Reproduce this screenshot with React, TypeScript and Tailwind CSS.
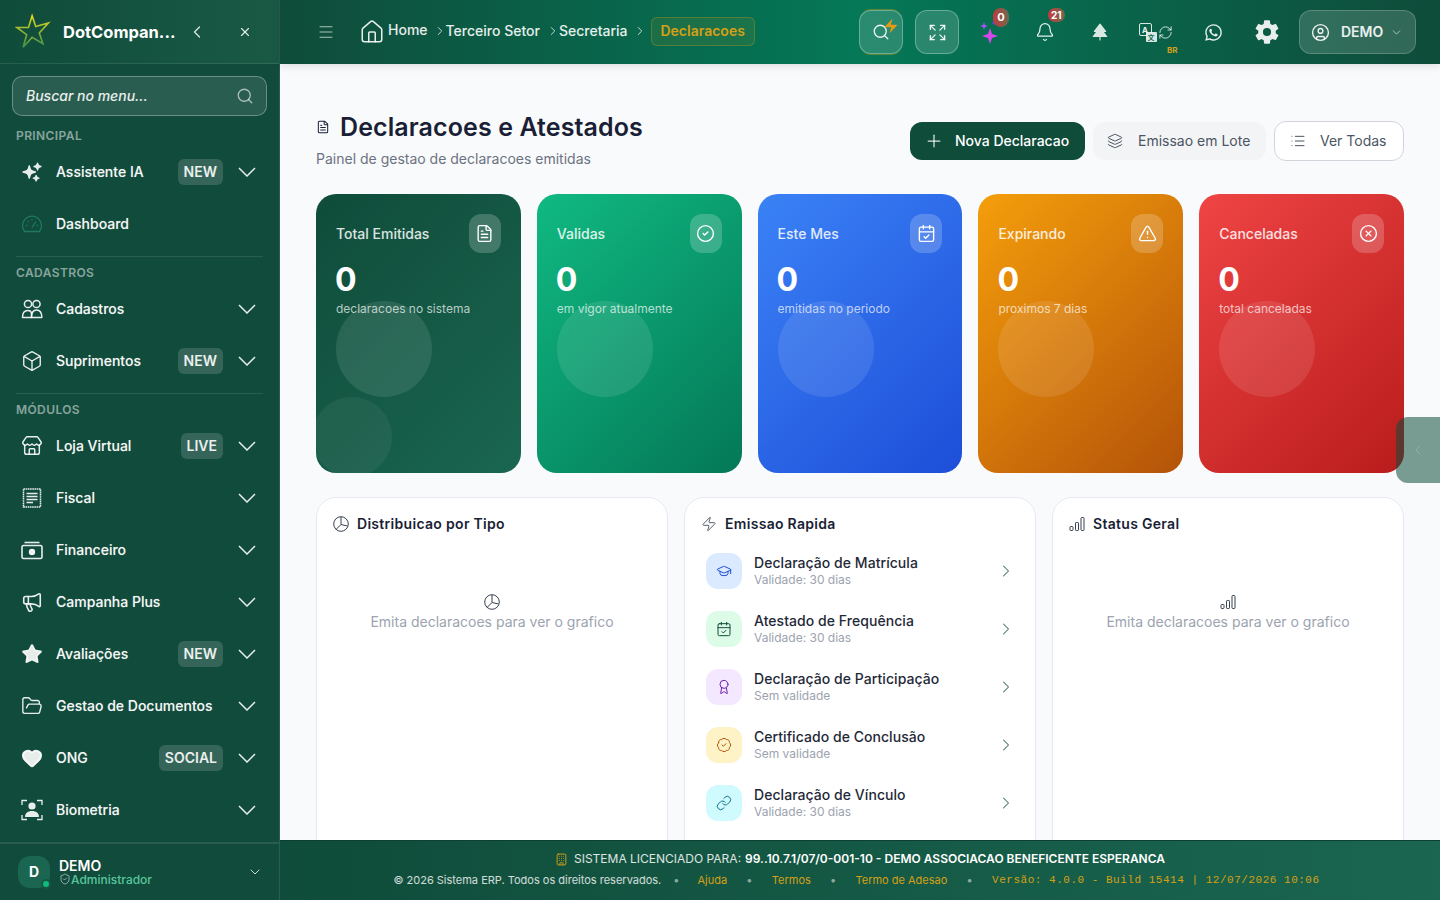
import React from 'react';
import {
  Menu, ChevronLeft, X, Search, ChevronDown, ChevronRight, Plus, Layers, List, FileText, CircleCheck,
  CalendarCheck, TriangleAlert, CircleX, Zap, GraduationCap, Award, BadgeCheck, Link, Bell, Expand,
  CircleUser, RefreshCw, Box, Store, Megaphone, FolderOpen, Heart, ShieldCheck, Building, Home, Star,
} from 'lucide-react';
import { HiSparkles } from 'react-icons/hi2';
import { FaWhatsapp } from 'react-icons/fa';
import { IoSettingsSharp } from 'react-icons/io5';
import { PiTreeEvergreenFill } from 'react-icons/pi';

type NavItem = { label: string; icon: React.ReactNode; badge?: string; noArrow?: boolean };

const ico = 'w-[22px] h-[22px] text-white/90';

const GaugeIcon = () => (
  <svg viewBox="0 0 22 22" className="w-[22px] h-[22px] text-[#1f7a5f]" fill="none" stroke="currentColor" strokeWidth="1.3">
    <path d="M3.5 18.5 A9.5 9.5 0 1 1 18.5 18.5 Z" strokeLinejoin="round" />
    <path d="M11 14.5 L15 8.5 M5 12.5 H6.5 M15.5 12.5 H17 M11 6 V7.5 M6.8 8 L7.8 9" />
  </svg>
);

const UsersIcon = () => (
  <svg viewBox="0 0 22 22" className={ico} fill="none" stroke="currentColor" strokeWidth="1.5">
    <circle cx="7" cy="6" r="3.6" />
    <circle cx="15.5" cy="6" r="3.6" />
    <path d="M1.5 19.5 C1.5 15 3.5 12.5 6.8 12.5 C9 12.5 10.5 14 10.5 16 V19.5 Z" strokeLinejoin="round" />
    <path d="M10.5 19.5 C10.5 15 12.5 12 15.5 12 C18.8 12 20.8 15 20.8 19.5 Z" strokeLinejoin="round" />
  </svg>
);

const FiscalIcon = () => (
  <svg viewBox="0 0 22 22" className={ico} fill="none" stroke="currentColor" strokeWidth="1.5">
    <rect x="2.5" y="2" width="17" height="18" strokeDasharray="1.6 0.6" />
    <path d="M5.5 6.5 H16.5 M5.5 9.5 H16.5 M5.5 12.5 H16.5 M5.5 15.5 H12" />
  </svg>
);

const MoneyIcon = () => (
  <svg viewBox="0 0 22 22" className={ico} fill="none" stroke="currentColor" strokeWidth="1.6">
    <path d="M3.5 3.5 H18.5" />
    <rect x="1" y="6.5" width="20" height="13" rx="1.5" />
    <circle cx="11" cy="13" r="2.4" fill="currentColor" />
  </svg>
);

const BiometricIcon = () => (
  <svg viewBox="0 0 22 22" className={ico} fill="none" stroke="currentColor" strokeWidth="1.3">
    <path d="M1 6 V1.5 H6 M16 1.5 H21 V6 M1 16 V20.5 H6 M16 20.5 H21 V16" />
    <circle cx="11" cy="7" r="3.6" fill="currentColor" stroke="none" />
    <path d="M4 18 C4 14 7 12 11 12 C15 12 18 14 18 18 Z" fill="currentColor" stroke="none" />
  </svg>
);

const principal: NavItem[] = [
  { label: 'Assistente IA', icon: <HiSparkles className={ico} />, badge: 'NEW' },
  { label: 'Dashboard', icon: <GaugeIcon />, noArrow: true },
];
const cadastros: NavItem[] = [
  { label: 'Cadastros', icon: <UsersIcon /> },
  { label: 'Suprimentos', icon: <Box className={ico} strokeWidth={1.5} />, badge: 'NEW' },
];
const modulos: NavItem[] = [
  { label: 'Loja Virtual', icon: <Store className={ico} strokeWidth={1.6} />, badge: 'LIVE' },
  { label: 'Fiscal', icon: <FiscalIcon /> },
  { label: 'Financeiro', icon: <MoneyIcon /> },
  { label: 'Campanha Plus', icon: <Megaphone className={ico} strokeWidth={1.75} /> },
  { label: 'Avaliações', icon: <Star className={ico} strokeWidth={1.5} fill="currentColor" />, badge: 'NEW' },
  { label: 'Gestao de Documentos', icon: <FolderOpen className={ico} strokeWidth={1.5} /> },
  { label: 'ONG', icon: <Heart className={ico} fill="currentColor" />, badge: 'SOCIAL' },
  { label: 'Biometria', icon: <BiometricIcon /> },
];

const stats = [
  { title: 'Total Emitidas', sub: 'declaracoes no sistema', bg: 'bg-[linear-gradient(135deg,#0f4c3a,#1a6650)]', icon: FileText, extra: true },
  { title: 'Validas', sub: 'em vigor atualmente', bg: 'bg-[linear-gradient(135deg,#10b981,#047857)]', icon: CircleCheck },
  { title: 'Este Mes', sub: 'emitidas no periodo', bg: 'bg-[linear-gradient(135deg,#3b82f6,#1d4ed8)]', icon: CalendarCheck },
  { title: 'Expirando', sub: 'proximos 7 dias', bg: 'bg-[linear-gradient(135deg,#f59e0b,#b45309)]', icon: TriangleAlert },
  { title: 'Canceladas', sub: 'total canceladas', bg: 'bg-[linear-gradient(135deg,#ef4444,#b91c1c)]', icon: CircleX },
];

const quick = [
  { title: 'Declaração de Matrícula', sub: 'Validade: 30 dias', box: 'bg-[#dbeafe]', color: 'text-[#1d4ed8]', icon: GraduationCap },
  { title: 'Atestado de Frequência', sub: 'Validade: 30 dias', box: 'bg-[#dcfce7]', color: 'text-[#0f4c3a]', icon: CalendarCheck },
  { title: 'Declaração de Participação', sub: 'Sem validade', box: 'bg-[#f3e8ff]', color: 'text-[#6b21a8]', icon: Award },
  { title: 'Certificado de Conclusão', sub: 'Sem validade', box: 'bg-[#fef3c7]', color: 'text-[#b45309]', icon: BadgeCheck },
  { title: 'Declaração de Vínculo', sub: 'Validade: 30 dias', box: 'bg-[#cffafe]', color: 'text-[#0e7490]', icon: Link },
];

const Logo = () => (
  <svg viewBox="0 0 40 40" className="w-[36px] h-[38px] shrink-0">
    <defs>
      <linearGradient id="logoStar" x1="0" y1="0" x2="0" y2="1">
        <stop offset="0" stopColor="#e6d820" />
        <stop offset="1" stopColor="#3f8f4a" />
      </linearGradient>
    </defs>
    <path d="M19 2 L23 14 L37 10 L27 21 L31 33 L19 26 L9 37 L13 23 L2 15 L15 15 Z" fill="none" stroke="url(#logoStar)" strokeWidth="1.8" strokeLinejoin="miter" />
  </svg>
);

const PieIcon = ({ className }: { className?: string }) => (
  <svg viewBox="0 0 16 16" className={className} fill="none" stroke="currentColor" strokeWidth="1">
    <circle cx="8" cy="8" r="7.3" />
    <path d="M8 1 V8.5 L14.5 10 M8 8.5 L3 13.5" />
  </svg>
);

const BarsIcon = ({ className }: { className?: string }) => (
  <svg viewBox="0 0 16 16" className={className} fill="none" stroke="currentColor" strokeWidth="1">
    <rect x="1" y="10.5" width="3" height="4" rx="0.7" />
    <rect x="6.5" y="6.5" width="3" height="8" rx="0.7" />
    <rect x="12" y="1.5" width="3" height="13" rx="0.7" />
  </svg>
);

const NavArrow = () => (
  <svg viewBox="0 0 18 10" className="w-[18px] h-[10px] text-white/90 shrink-0" fill="none" stroke="currentColor" strokeWidth="1.5">
    <path d="M1 1 L9 9 L17 1" />
  </svg>
);

const NavRow: React.FC<{ item: NavItem }> = ({ item }) => (
  <div className="h-[52px] flex items-center pl-[21px] pr-[23px]">
    <span className="w-[35px] shrink-0 flex">{item.icon}</span>
    <span className="text-sm font-medium text-white/95 flex-1 whitespace-nowrap [text-shadow:0_0_1px_rgba(255,255,255,0.35)]">{item.label}</span>
    {item.badge && (
      <span className="h-[26px] px-1.5 mr-[15px] rounded-md bg-white/15 text-sm font-semibold text-white/90 flex items-center">{item.badge}</span>
    )}
    {!item.noArrow && <NavArrow />}
  </div>
);

const SectionLabel: React.FC<{ text: string }> = ({ text }) => (
  <div className="pl-4 h-[14px] leading-[14px] text-xs font-semibold tracking-[0.4px] text-white/50">{text}</div>
);

const Sidebar = () => (
  <aside className="w-[280px] h-[900px] shrink-0 flex flex-col bg-[#114b3b] border-r border-white/10">
    <div className="h-[64px] shrink-0 flex items-center pl-[15px] pr-[27px] border-b border-white/10 bg-[linear-gradient(90deg,#0f4c3a,#1a5a45)]">
      <Logo />
      <span className="ml-3 mt-[1px] w-[111px] whitespace-nowrap text-[16.5px] font-bold text-white">DotCompan...</span>
      <ChevronLeft className="ml-[13px] w-[20px] h-[20px] text-white/85" strokeWidth={1.5} />
      <X className="ml-auto w-[14px] h-[14px] text-white/85" strokeWidth={2} />
    </div>
    <div className="px-3 pt-3 shrink-0">
      <div className="h-[40px] rounded-[10px] border border-white/30 bg-white/10 flex items-center justify-between pl-[13px] pr-[12px]">
        <span className="text-sm font-medium italic text-white/90">Buscar no menu...</span>
        <Search className="w-[18px] h-[18px] text-white/60" strokeWidth={1.75} />
      </div>
    </div>
    <div className="flex-1 overflow-hidden pt-[13px]">
      <SectionLabel text="PRINCIPAL" />
      <div className="mt-[3px]">{principal.map(i => <NavRow key={i.label} item={i} />)}</div>
      <div className="mx-4 mt-[6px] mb-[9px] h-px bg-white/10" />
      <SectionLabel text="CADASTROS" />
      <div className="mt-[3px]">{cadastros.map(i => <NavRow key={i.label} item={i} />)}</div>
      <div className="mx-4 mt-[6px] mb-[9px] h-px bg-white/10" />
      <SectionLabel text="MÓDULOS" />
      <div className="mt-[3px]">{modulos.map(i => <NavRow key={i.label} item={i} />)}</div>
    </div>
    <div className="h-[58px] shrink-0 border-t-2 border-white/10 flex items-center pl-[18px] pr-[16px]">
      <div className="relative w-8 h-8 rounded-xl bg-[#1a6650] flex items-center justify-center text-sm font-bold text-white">
        D
        <span className="absolute -right-[1px] -bottom-[1px] w-[10px] h-[10px] rounded-full bg-[#10b981] border-2 border-[#15573f]" />
      </div>
      <div className="ml-[9px] flex-1">
        <div className="text-sm font-semibold text-white leading-[14px]">DEMO</div>
        <div className="flex items-center text-xs font-medium text-[#6ee7b7]/80 leading-[13px]">
          <ShieldCheck className="w-3 h-3 text-white/70" strokeWidth={1.5} />Administrador
        </div>
      </div>
      <ChevronDown className="w-[16px] h-[16px] text-white/80" strokeWidth={1.5} />
    </div>
  </aside>
);

const Crumb: React.FC<{ text: string }> = ({ text }) => (
  <span className="flex items-center gap-[1px] -mt-[2px]">
    <ChevronRight className="w-[14px] h-[14px] -mx-[2px] text-white/85 shrink-0" strokeWidth={1.5} />
    <span className="text-sm font-medium text-white/90">{text}</span>
  </span>
);

const Header = () => (
  <header className="h-[64px] shrink-0 flex items-center bg-[linear-gradient(90deg,#0f4c3a,#047857_50%,#0f4c3a)] shadow-[0_2px_8px_rgba(0,0,0,0.12)] z-10">
    <Menu className="ml-[37px] w-[18px] h-[18px] text-white/70" strokeWidth={1.25} />
    <Home className="ml-[24px] w-[26px] h-[26px] text-white/90" strokeWidth={1.4} />
    <span className="ml-[3px] -mt-1 text-sm font-medium text-white/90">Home</span>
    <span className="ml-[7px]"><Crumb text="Terceiro Setor" /></span>
    <span className="ml-[8px]"><Crumb text="Secretaria" /></span>
    <ChevronRight className="ml-[6px] -mt-[2px] w-[14px] h-[14px] text-white/85" strokeWidth={1.5} />
    <span className="ml-[4px] -mt-[2px] h-[29px] px-2 w-[104px] flex items-center rounded-md border border-[#d4a017]/30 bg-[#d4a017]/10 text-sm font-semibold text-[#d4a017]">Declaracoes</span>

    <div className="ml-auto flex items-center pr-6">
      <div className="relative w-11 h-11 rounded-xl border border-white/30 bg-white/15 shadow-[0_-2px_1px_-1px_rgba(212,160,23,0.45),0_2px_1px_-1px_rgba(212,160,23,0.45)] flex items-center justify-center">
        <Search className="w-[18px] h-[18px] text-white/90" strokeWidth={1.75} />
        <Zap className="absolute top-[7px] right-[3px] w-[16px] h-[16px] text-[#e09a18]" fill="currentColor" strokeWidth={0} />
      </div>
      <div className="ml-3 w-11 h-11 rounded-xl border border-white/30 bg-white/15 flex items-center justify-center">
        <Expand className="w-[19px] h-[19px] text-white/90" strokeWidth={1.75} />
      </div>
      <div className="relative w-[54px] ml-[4px] flex justify-center">
        <svg viewBox="0 0 26 26" className="w-[26px] h-[26px]">
          <path d="M13 9 L15 15 L21 17 L15 19 L13 25 L11 19 L5 17 L11 15 Z" fill="#d946ef" />
          <path d="M7 3 L8 6 L11 7 L8 8 L7 11 L6 8 L3 7 L6 6 Z" fill="#a855f7" />
          <path d="M17 1.5 L17.7 3.3 L19.5 4 L17.7 4.7 L17 6.5 L16.3 4.7 L14.5 4 L16.3 3.3 Z" fill="#7c3aed" />
        </svg>
        <span className="absolute -top-[11px] left-[30px] w-4 h-[19px] rounded-full bg-[linear-gradient(90deg,#c23b3b,#6b6a50)] text-[11px] font-bold text-white flex items-center justify-center">0</span>
      </div>
      <div className="relative w-[55px] flex justify-center">
        <Bell className="w-[20px] h-[20px] text-white/90" strokeWidth={1.5} />
        <span className="absolute -top-[14px] left-[31px] px-[3px] h-[14px] rounded-full bg-[linear-gradient(90deg,#c93a3a,#6b6a50)] text-[10px] font-bold text-white flex items-center justify-center">21</span>
      </div>
      <div className="w-[56px] flex justify-center">
        <PiTreeEvergreenFill className="w-[18px] h-[18px] text-white/85" />
      </div>
      <div className="relative w-[57px] flex items-center justify-center">
        <span className="relative w-[13px] h-[13px] -ml-[2px] -mt-[5px] rounded-[2px] border border-white/85 text-[8px] font-bold text-white/90 flex items-center justify-center">
          A
          <span className="absolute -right-[6px] -bottom-[7px] w-[11px] h-[10px] bg-white/85 rounded-[1px] text-[7px] leading-[10px] text-center text-[#0b6b50] font-['Noto_Sans_CJK_SC',sans-serif]">文</span>
        </span>
        <RefreshCw className="ml-[6px] w-[15px] h-[15px] text-white/85" strokeWidth={1.5} />
        <span className="absolute top-[19px] left-[39px] text-[8px] font-bold text-[#d4a017]">BR</span>
      </div>
      <div className="w-[56px] flex justify-center">
        <FaWhatsapp className="w-[19px] h-[19px] text-white/90" />
      </div>
      <div className="w-[52px] flex justify-center">
        <IoSettingsSharp className="w-[26px] h-[26px] text-white/90" />
      </div>
      <div className="ml-[6px] h-11 w-[117px] rounded-xl border border-white/20 bg-white/15 flex items-center pl-[11px]">
        <CircleUser className="w-[19px] h-[19px] text-white/90" strokeWidth={1.75} />
        <span className="ml-[11px] text-sm font-semibold text-white/90">DEMO</span>
        <ChevronDown className="ml-[7px] w-[13px] h-[13px] text-white/70" strokeWidth={1.5} />
      </div>
    </div>
  </header>
);

const StatCard: React.FC<(typeof stats)[number]> = ({ title, sub, bg, icon: Icon, extra }) => (
  <div className={`relative overflow-hidden h-[279px] rounded-[20px] p-5 ${bg}`}>
    <div className="absolute left-5 top-[107px] w-24 h-24 rounded-full bg-white/10" />
    {extra && <div className="absolute -left-[4px] top-[203px] w-20 h-20 rounded-full bg-white/5" />}
    <div className="relative flex justify-between items-start">
      <span className="mt-[11px] text-sm font-medium leading-[18px] text-white/85">{title}</span>
      <span className="w-8 h-[39px] rounded-xl bg-white/20 flex items-center justify-center">
        <Icon className="w-[19px] h-[19px] text-white" strokeWidth={1.75} />
      </span>
    </div>
    <div className="relative mt-[6px] text-[32px] leading-[40px] font-bold text-white -translate-x-[1px] translate-y-[1px]">0</div>
    <div className="relative mt-[1px] text-xs leading-[18px] text-white/70 whitespace-nowrap">{sub}</div>
  </div>
);

const PanelTitle: React.FC<{ icon: React.ReactNode; text: string }> = ({ icon, text }) => (
  <div className="flex items-center h-[20px]">
    <span className="w-[24px] shrink-0 flex">{icon}</span>
    <span className="text-sm font-semibold tracking-[0.3px] text-[#1a1f36]">{text}</span>
  </div>
);

const EmptyChart: React.FC<{ icon: React.ReactNode }> = ({ icon }) => (
  <div className="mt-[60px] flex flex-col items-center">
    {icon}
    <span className="mt-[2px] text-sm text-[#9ca3af]">Emita declaracoes para ver o grafico</span>
  </div>
);

const Panel: React.FC<{ children: React.ReactNode }> = ({ children }) => (
  <div className="h-[420px] rounded-[20px] border border-[#e8eaef] bg-white px-4 pt-[16px]">{children}</div>
);

const FooterDot = () => <span className="mx-[19.25px] text-white/50">•</span>;

const Footer = () => (
  <footer className="h-[60px] shrink-0 border-t border-[#0d4030] bg-[linear-gradient(90deg,#0f4c3a,#1a6650)] flex flex-col items-center pt-[10px]">
    <div className="flex items-center text-xs text-white/85 leading-[16px]">
      <Building className="w-[13px] h-[13px] mr-[6px] text-[#d4a017]" strokeWidth={1.75} />
      SISTEMA LICENCIADO PARA:
      <span className="ml-1 font-semibold text-white">99..10.7.1/07/0-001-10 - DEMO ASSOCIACAO BENEFICENTE ESPERANCA</span>
    </div>
    <div className="mt-[5px] pr-[7px] flex items-center text-[11px] leading-[16px] text-white/80">
      <span>© 2026 Sistema ERP. Todos os direitos reservados.</span>
      <span className="ml-[12px] mr-[18px] text-white/50">•</span>
      <span className="text-[#d4a017]">Ajuda</span>
      <FooterDot />
      <span className="text-[#d4a017]">Termos</span>
      <FooterDot />
      <span className="text-[#d4a017]">Termo de Adesao</span>
      <FooterDot />
      <span className="font-['Liberation_Mono',monospace] tracking-[0.52px] text-[#d4a017]">Versão: 4.0.0 - Build 15414 | 12/07/2026 10:06</span>
    </div>
  </footer>
);

export default function App() {
  return (
    <div className="relative w-[1440px] h-[900px] overflow-hidden flex font-[Inter,sans-serif] bg-[#f9fafc]">
      <Sidebar />
      <div className="flex-1 min-w-0 flex flex-col">
        <Header />
        <main className="flex-1 overflow-hidden px-9 pt-[47px]">
          <div className="flex justify-between items-center">
            <div>
              <h1 className="flex items-center text-[25px] leading-[32px] font-semibold text-[#1a1f36]">
                <FileText className="w-[14px] h-[14px] mr-[10px] text-[#1a1f36]" strokeWidth={1.75} />
                <span className="tracking-[0.1px]">Declaracoes e Atestados</span>
              </h1>
              <p className="mt-[6px] text-sm text-[#6b7280]">Painel de gestao de declaracoes emitidas</p>
            </div>
            <div className="flex items-center gap-2 mt-[2px]">
              <button className="h-[38px] w-[175px] rounded-xl bg-[#0f4c3a] flex items-center pl-[14px] text-sm font-medium text-white">
                <Plus className="w-[20px] h-[20px] mr-[11px] text-white/85" strokeWidth={1.5} />Nova Declaracao
              </button>
              <button className="h-[38px] w-[173px] rounded-xl bg-[#f3f4f6] flex items-center pl-[14px] text-sm text-[#4b5563]">
                <Layers className="w-[16px] h-[16px] mr-[15px]" strokeWidth={1.5} />Emissao em Lote
              </button>
              <button className="h-[40px] w-[130px] rounded-xl border border-[#d1d5db] bg-white flex items-center pl-[15px] text-sm text-[#4b5563]">
                <List className="w-[16px] h-[16px] mr-[14px]" strokeWidth={1.5} />Ver Todas
              </button>
            </div>
          </div>
          <div className="mt-[25px] grid grid-cols-5 gap-4">
            {stats.map(s => <StatCard key={s.title} {...s} />)}
          </div>
          <div className="mt-6 grid grid-cols-3 gap-4">
            <Panel>
              <PanelTitle icon={<PieIcon className="w-4 h-4 text-[#374151]" />} text="Distribuicao por Tipo" />
              <EmptyChart icon={<PieIcon className="w-4 h-4 text-[#374151]" />} />
            </Panel>
            <Panel>
              <PanelTitle icon={<Zap className="w-4 h-4 text-[#374151]" strokeWidth={1.25} />} text="Emissao Rapida" />
              <div className="mt-[8px]">
                {quick.map(q => (
                  <div key={q.title} className="h-[58px] flex items-center pl-[5px] pr-[3px]">
                    <span className={`w-9 h-9 shrink-0 rounded-xl flex items-center justify-center ${q.box}`}>
                      <q.icon className={`w-4 h-4 ${q.color}`} strokeWidth={1.5} />
                    </span>
                    <span className="ml-3 flex-1 min-w-0">
                      <span className="block text-sm font-medium leading-[17px] tracking-[0.05px] text-[#1f2937]">{q.title}</span>
                      <span className="block text-xs leading-[17px] text-[#9ca3af]">{q.sub}</span>
                    </span>
                    <ChevronRight className="w-5 h-5 text-[#0f4c3a]/80" strokeWidth={1.25} />
                  </div>
                ))}
              </div>
            </Panel>
            <Panel>
              <PanelTitle icon={<BarsIcon className="w-4 h-4 text-[#374151]" />} text="Status Geral" />
              <EmptyChart icon={<BarsIcon className="w-4 h-4 text-[#374151]" />} />
            </Panel>
          </div>
        </main>
        <Footer />
      </div>
      <div className="absolute right-0 top-[417px] w-[44px] h-[66px] rounded-l-xl bg-[#0f4c3a]/55 flex items-center justify-center">
        <ChevronLeft className="w-[16px] h-[16px] text-white/20" strokeWidth={1.5} />
      </div>
    </div>
  );
}
